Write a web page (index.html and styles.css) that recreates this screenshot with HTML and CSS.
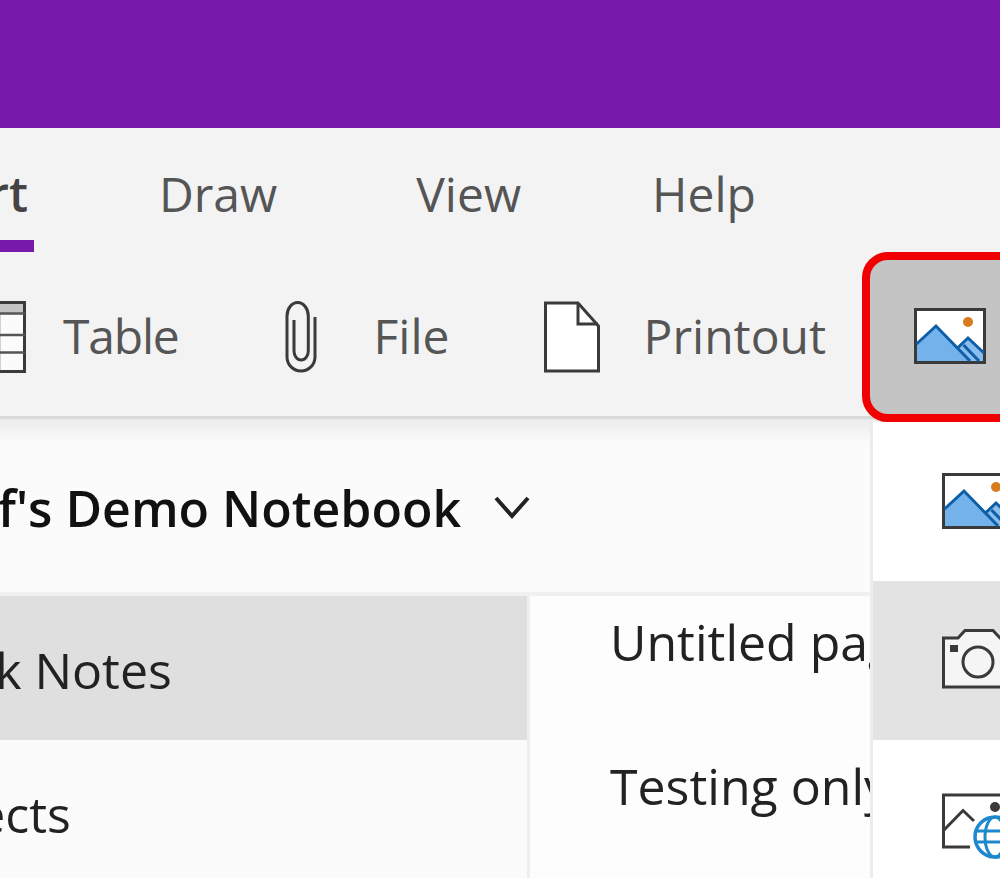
FILE: index.html
```html
<!DOCTYPE html>
<html lang="en">
<head>
<meta charset="utf-8">
<title>OneNote</title>
<link rel="stylesheet" href="styles.css">
</head>
<body>
<div class="app">
  <header class="titlebar"></header>
  <section class="ribbon">
    <nav class="tabs">
      <span class="tab tab-active">Insert</span>
      <span class="tab tab-draw">Draw</span>
      <span class="tab tab-view">View</span>
      <span class="tab">Help</span>
    </nav>
    <div class="tools">
      <div class="tool tool-table">
        <svg class="ico" width="56" height="72" viewBox="0 0 56 72"><rect x="1.5" y="1.5" width="53" height="69" fill="#fbfbfb" stroke="#3a3a3a" stroke-width="3"/><rect x="3" y="3" width="50" height="9" fill="#c4c4c4"/><path d="M2 12.500H55M2 34H55M2 51.500H55M29 12V70" fill="none" stroke="#555" stroke-width="2.500"/></svg>
        <span>Table</span>
      </div>
      <div class="tool tool-file">
        <svg class="ico" width="36" height="72" viewBox="0 0 36 72"><path d="M32 16V56A14 14 0 0 1 4 56V15A10.650 13.500 0 0 1 25.300 15V50A7.150 9 0 0 1 11 50V19" fill="none" stroke="#3a3a3a" stroke-width="3"/></svg>
        <span>File</span>
      </div>
      <div class="tool tool-print">
        <svg class="ico" width="56" height="72" viewBox="0 0 56 72"><path d="M1.500 2H34L54.500 25V70H1.500Z" fill="#fff" stroke="#3a3a3a" stroke-width="3"/><path d="M34 2V23H54" fill="none" stroke="#3a3a3a" stroke-width="3"/></svg>
        <span>Printout</span>
      </div>
    </div>
  </section>
  <div class="shade"></div>
  <div class="notebook">
    <span class="notebook-name">Jeff's Demo Notebook</span>
    <svg class="chevron" width="36" height="26" viewBox="0 0 36 26"><path d="M2 3L18 21L34 3" fill="none" stroke="#222" stroke-width="4"/></svg>
  </div>
  <div class="panes">
    <div class="sections">
      <div class="row row-selected"><span>Quick Notes</span></div>
      <div class="row row-projects"><span>Projects</span></div>
    </div>
    <div class="pages">
      <div class="page">Untitled page</div>
      <div class="page">Testing only</div>
    </div>
  </div>
</div>

<button class="picture-btn" type="button">
  <svg width="72" height="56" viewBox="0 0 72 56"><use href="#img-icon"/></svg>
</button>

<div class="menu">
  <div class="menu-item menu-first">
    <svg class="menu-ico" width="72" height="56" viewBox="0 0 72 56"><use href="#img-icon"/></svg>
  </div>
  <div class="menu-item menu-hover">
    <svg class="menu-ico" width="72" height="60" viewBox="0 0 72 60"><path d="M1.500 9H16L23 1.500H51L58 9H70.500V58H1.500Z" fill="#f5f5f5" stroke="#3a3a3a" stroke-width="3"/><circle cx="36" cy="33" r="15" fill="#f5f5f5" stroke="#3a3a3a" stroke-width="3"/><rect x="8" y="16" width="8" height="7" fill="#3a3a3a"/></svg>
  </div>
  <div class="menu-item menu-online">
    <svg class="menu-ico" width="72" height="66" viewBox="0 0 72 66"><path d="M28 54H1.500V2H70.500V40" fill="#fff" stroke="#3a3a3a" stroke-width="3"/><path d="M2 37L21 17.500L32 28" fill="none" stroke="#3a3a3a" stroke-width="3"/><circle cx="53" cy="14" r="5" fill="#3a3a3a"/><circle cx="53" cy="44" r="20" fill="#fff" stroke="#1e88cc" stroke-width="3.500"/><ellipse cx="53" cy="44" rx="10" ry="20" fill="none" stroke="#1e88cc" stroke-width="3"/><path d="M35 38H71M35 49H71" fill="none" stroke="#1e88cc" stroke-width="3"/></svg>
  </div>
</div>

<svg class="defs" width="0" height="0" aria-hidden="true">
  <symbol id="img-icon" viewBox="0 0 72 56">
    <rect x="1.500" y="1.500" width="69" height="53" fill="#fff" stroke="#3a3a3a" stroke-width="3"/>
    <path d="M3 35L22 18L56 53H3Z" fill="#74b2ec"/>
    <path d="M44 39.500L54 30L69 44V53H56Z" fill="#88bdee"/>
    <path d="M2.500 36L22 18L56 53M44 39.500L54 30L70 45M49.500 37L65 53" fill="none" stroke="#0f5ea8" stroke-width="3"/>
    <circle cx="54" cy="14" r="5" fill="#d97a1c"/>
  </symbol>
</svg>
</body>
</html>
```

FILE: styles.css
```css
* { box-sizing: border-box; }
html, body { margin: 0; padding: 0; }
body {
  position: relative;
  width: 1000px;
  height: 878px;
  overflow: hidden;
  background: #fbfbfb;
  font-family: "Open Sans", "Noto Sans", sans-serif;
  font-size: 48px;
}
.app { display: flex; flex-direction: column; height: 878px; }
.titlebar { height: 128px; background: #7719aa; flex: none; }
.ribbon {
  flex: none;
  height: 291px;
  background: #f3f3f3;
  border-bottom: 3px solid #d9d9d9;
  display: flex;
  flex-direction: column;
}
.tabs {
  display: flex;
  height: 124px;
  margin-left: -108px;
  padding-top: 36px;
  color: #555;
  line-height: 60px;
  white-space: nowrap;
}
.tab-active {
  position: relative;
  font-weight: 600;
  color: #444;
  margin-right: 131px;
}
.tab-active::after {
  content: "";
  position: absolute;
  left: 0;
  right: -6px;
  top: 76px;
  height: 12px;
  background: #7719aa;
}
.tab-draw { margin-right: 139px; }
.tab-view { margin-right: 131px; }
.tools {
  display: flex;
  align-items: center;
  height: 72px;
  margin-top: 49px;
  margin-left: -30px;
  color: #555;
  white-space: nowrap;
}
.tool { display: flex; align-items: center; }
.tool span { padding-bottom: 3px; }
.ico { flex: none; }
.tool-table .ico { margin-right: 37px; }
.tool-file .ico { margin-right: 55px; }
.tool-print .ico { margin-right: 44px; }
.tool-table { margin-right: 104px; }
.tool-table span { letter-spacing: -1.2px; }
.tool-file { margin-right: 94px; }
.shade {
  flex: none;
  height: 24px;
  background: linear-gradient(#ebebeb, #fbfbfb);
}
.notebook {
  flex: none;
  height: 153px;
  margin-left: -64px;
  width: 1064px;
  display: flex;
  align-items: center;
  gap: 33px;
  color: #111;
  font-size: 50px;
  font-weight: 600;
  padding-bottom: 20px;
  border-bottom: 4px solid #f0f0f0;
  white-space: nowrap;
}
.chevron { flex: none; }
.panes { flex: 1; display: flex; min-height: 0; font-size: 50px; }
.sections {
  width: 530px;
  flex: none;
  border-right: 3px solid #efefef;
  color: #222;
}
.row {
  height: 144px;
  padding-top: 3px;
  display: flex;
  align-items: center;
  white-space: nowrap;
}
.row span { margin-left: -111px; }
.row-projects span { margin-left: -116px; }
.row-selected { background: #dfdfdf; }
.pages {
  flex: 1;
  padding-left: 80px;
  background: #fdfdfd;
  color: #222;
  white-space: nowrap;
  overflow: hidden;
}
.page { height: 144px; line-height: 92px; }
.picture-btn {
  position: absolute;
  left: 862px;
  top: 252px;
  width: 170px;
  height: 170px;
  padding: 0 0 2px 44px;
  display: flex;
  align-items: center;
  background: #c4c4c4;
  border: 8px solid #f00000;
  border-radius: 26px;
}
.picture-btn svg { display: block; }
.menu {
  position: absolute;
  left: 870px;
  top: 422px;
  width: 130px;
  height: 456px;
  background: #fff;
  border-left: 3px solid #ececec;
}
.menu-item { position: relative; }
.menu-first { height: 159px; }
.menu-hover { height: 159px; background: #e3e3e3; }
.menu-online { height: 138px; }
.menu-ico { position: absolute; left: 69px; }
.menu-first .menu-ico { top: 51px; }
.menu-hover .menu-ico { top: 48px; }
.menu-online .menu-ico { top: 53px; }
.defs { position: absolute; }
```
